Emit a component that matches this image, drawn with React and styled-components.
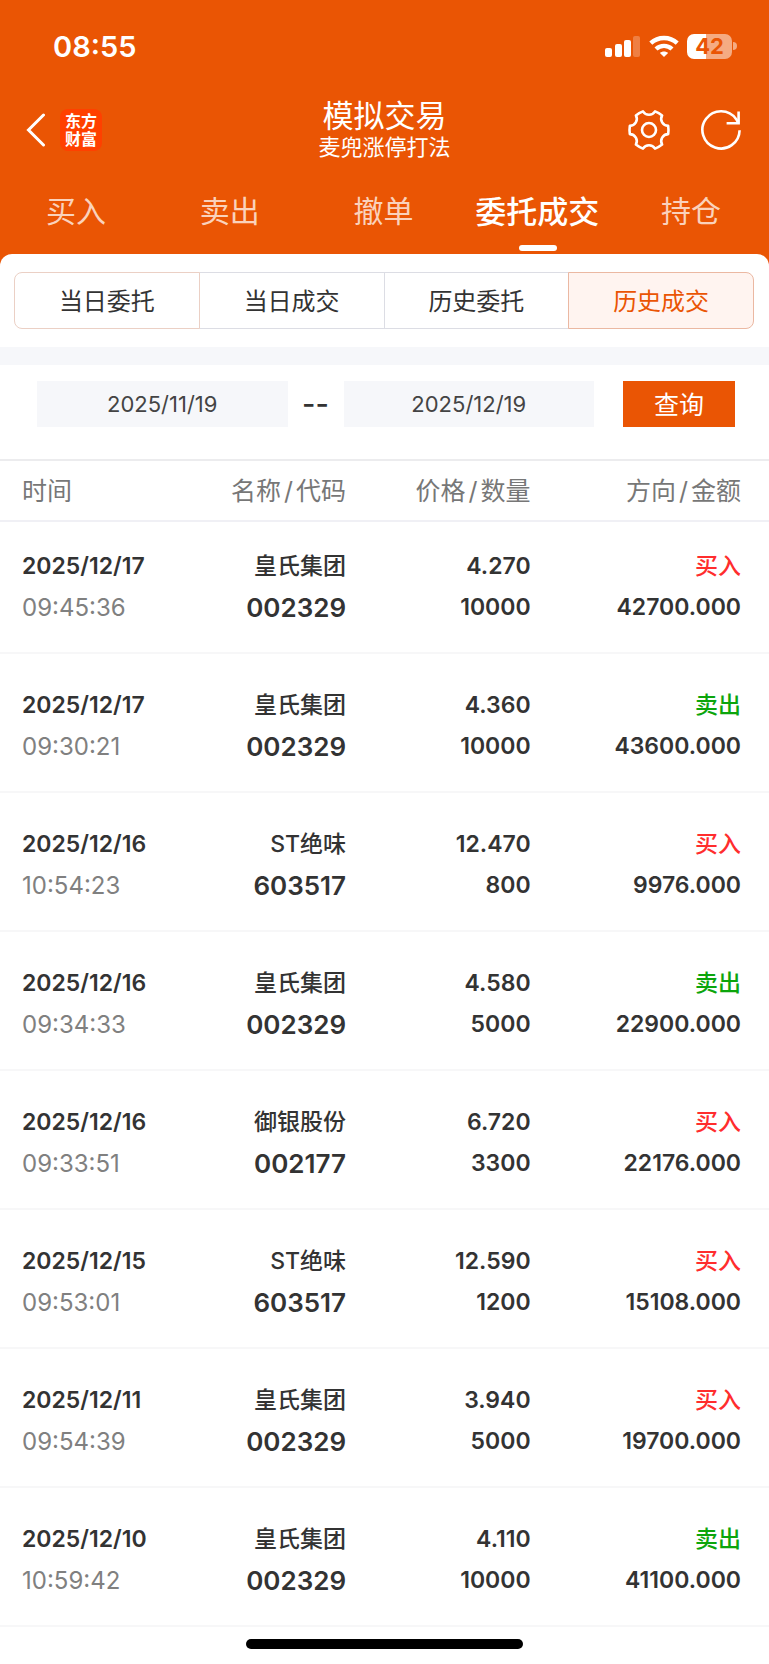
import React, { useState } from 'react';
import styled, { createGlobalStyle } from 'styled-components';

const GlobalStyle = createGlobalStyle`
  * {
    box-sizing: border-box;
  }

  body {
    margin: 0;
    background-color: #fff;
    color: #333;
    font-family: Inter, 'Noto Sans CJK SC', sans-serif;
  }

  button, input {
    font-family: inherit;
    margin: 0;
  }
`;

const tabs = ['买入', '卖出', '撤单', '委托成交', '持仓'];
const filters = ['当日委托', '当日成交', '历史委托', '历史成交'];

const trades = [
  { date: '2025/12/17', time: '09:45:36', name: '皇氏集团', code: '002329', price: '4.270', count: '10000', side: '买入', amount: '42700.000' },
  { date: '2025/12/17', time: '09:30:21', name: '皇氏集团', code: '002329', price: '4.360', count: '10000', side: '卖出', amount: '43600.000' },
  { date: '2025/12/16', time: '10:54:23', name: 'ST绝味', code: '603517', price: '12.470', count: '800', side: '买入', amount: '9976.000' },
  { date: '2025/12/16', time: '09:34:33', name: '皇氏集团', code: '002329', price: '4.580', count: '5000', side: '卖出', amount: '22900.000' },
  { date: '2025/12/16', time: '09:33:51', name: '御银股份', code: '002177', price: '6.720', count: '3300', side: '买入', amount: '22176.000' },
  { date: '2025/12/15', time: '09:53:01', name: 'ST绝味', code: '603517', price: '12.590', count: '1200', side: '买入', amount: '15108.000' },
  { date: '2025/12/11', time: '09:54:39', name: '皇氏集团', code: '002329', price: '3.940', count: '5000', side: '买入', amount: '19700.000' },
  { date: '2025/12/10', time: '10:59:42', name: '皇氏集团', code: '002329', price: '4.110', count: '10000', side: '卖出', amount: '41100.000' },
];

// six flat teeth joined by shallow curves
const gearPath = () => {
  const at = (radius, degrees) => {
    const angle = (degrees * Math.PI) / 180;
    return `${(22 + radius * Math.cos(angle)).toFixed(2)} ${(22 + radius * Math.sin(angle)).toFixed(2)}`;
  };
  let d = `M${at(19.6, -12)}`;
  for (let a = 0; a < 360; a += 60) {
    d += `Q${at(19.8, a)} ${at(19.6, a + 12)}C${at(14.4, a + 17)} ${at(14.4, a + 43)} ${at(19.6, a + 48)}`;
  }
  return `${d}Z`;
};

const SignalIcon = () => (
  <svg width="36" height="24" viewBox="0 0 36 24" fill="#fff" aria-hidden="true">
    <rect x="0" y="14" width="7" height="9" rx="2" />
    <rect x="10" y="10" width="7" height="13" rx="2" />
    <rect x="19" y="6" width="7" height="17" rx="2" />
    <rect x="28" y="2" width="7" height="21" rx="2" opacity="0.25" />
  </svg>
);

const WifiIcon = () => (
  <svg width="30" height="24" viewBox="0 0 30 24" fill="none" stroke="#fff" strokeWidth="4.4" aria-hidden="true">
    <path d="M1.8 9.2C9.2 2.3 20.8 2.3 28.2 9.2" />
    <path d="M7 15C11.5 10.8 18.5 10.8 23 15" />
    <path d="M15 23L10.9 18.9C13.2 16.9 16.8 16.9 19.1 18.9Z" fill="#fff" stroke="none" />
  </svg>
);

const BackIcon = () => (
  <svg width="20" height="34" viewBox="0 0 20 34" fill="none" stroke="#fff" strokeWidth="3" aria-hidden="true">
    <path d="M17.5 2L2.5 17L17.5 32" strokeLinecap="round" />
  </svg>
);

const GearIcon = () => (
  <svg width="44" height="44" viewBox="0 0 44 44" fill="none" stroke="#fff" strokeWidth="2.6" strokeLinejoin="round" aria-hidden="true">
    <path d={gearPath()} />
    <circle cx="22" cy="22" r="7" />
  </svg>
);

const RefreshIcon = () => (
  <svg width="44" height="44" viewBox="0 0 44 44" fill="none" stroke="#fff" strokeWidth="2.6" aria-hidden="true">
    <path d="M40.6 22.2A18.6 18.6 0 1 1 37.2 11.2L39.4 15" />
    <path d="M39.6 3.5V15.2H27.6" />
  </svg>
);

const App = () => {
  const [tab, setTab] = useState('委托成交');
  const [filter, setFilter] = useState('历史成交');
  const [from, setFrom] = useState('2025/11/19');
  const [to, setTo] = useState('2025/12/19');

  return (
    <>
      <GlobalStyle />
      <Header>
        <StatusBar>
          <Clock>08:55</Clock>
          <StatusIcons>
            <SignalIcon />
            <WifiIcon />
            <Battery>
              <BatteryBody>42</BatteryBody>
              <BatteryCap />
            </Battery>
          </StatusIcons>
        </StatusBar>
        <TitleBar>
          <BarSide>
            <IconButton aria-label="返回"><BackIcon /></IconButton>
            <Logo>东方<br />财富</Logo>
          </BarSide>
          <Titles>
            <Title>模拟交易</Title>
            <Subtitle>麦兜涨停打法</Subtitle>
          </Titles>
          <BarSide $end>
            <IconButton aria-label="设置"><GearIcon /></IconButton>
            <IconButton aria-label="刷新"><RefreshIcon /></IconButton>
          </BarSide>
        </TitleBar>
        <Tabs>
          {tabs.map((name) => (
            <Tab key={name} $active={name === tab} onClick={() => setTab(name)}>{name}</Tab>
          ))}
        </Tabs>
      </Header>

      <Main>
        <Filters>
          {filters.map((name) => (
            <Filter key={name} $active={name === filter} onClick={() => setFilter(name)}>{name}</Filter>
          ))}
        </Filters>
        <SearchForm onSubmit={(e) => e.preventDefault()}>
          <DateInput aria-label="开始日期" value={from} onChange={(e) => setFrom(e.target.value)} />
          <Dash>--</Dash>
          <DateInput aria-label="结束日期" value={to} onChange={(e) => setTo(e.target.value)} />
          <SearchButton type="submit">查询</SearchButton>
        </SearchForm>

        <TradeTable>
          <thead>
            <tr>
              <HeadCell $width="24%">时间</HeadCell>
              <HeadCell $width="21%">名称<Slash>/</Slash>代码</HeadCell>
              <HeadCell $width="24%">价格<Slash>/</Slash>数量</HeadCell>
              <HeadCell $width="31%">方向<Slash>/</Slash>金额</HeadCell>
            </tr>
          </thead>
          <tbody>
            {trades.map((trade) => (
              <TradeRow key={`${trade.date} ${trade.time}`}>
                <Cell>
                  <Line>{trade.date}</Line>
                  <TimeLine>{trade.time}</TimeLine>
                </Cell>
                <Cell>
                  <NameLine>{trade.name}</NameLine>
                  <CodeLine>{trade.code}</CodeLine>
                </Cell>
                <Cell>
                  <Line>{trade.price}</Line>
                  <Line>{trade.count}</Line>
                </Cell>
                <Cell>
                  <SideLine $buy={trade.side === '买入'}>{trade.side}</SideLine>
                  <Line>{trade.amount}</Line>
                </Cell>
              </TradeRow>
            ))}
          </tbody>
        </TradeTable>
      </Main>
      <HomeIndicator />
    </>
  );
};

export default App;

const Header = styled.header`
  background-color: #ea5504;
  color: #fff;
  padding-bottom: 12px;
`;

const StatusBar = styled.div`
  display: flex;
  align-items: center;
  justify-content: space-between;
  height: 92px;
  padding: 0 32px 0 53px;
`;

const Clock = styled.span`
  font-size: 29px;
  font-weight: 600;
`;

const StatusIcons = styled.div`
  display: flex;
  align-items: center;
  gap: 8px;
`;

const Battery = styled.div`
  display: flex;
  align-items: center;
  gap: 1px;
`;

const BatteryBody = styled.span`
  width: 45px;
  height: 25px;
  border-radius: 7px;
  background: linear-gradient(to right, #fff 42%, #f5ab82 42%);
  color: #ea5504;
  font-size: 22px;
  font-weight: 700;
  line-height: 25px;
  text-align: center;
`;

const BatteryCap = styled.span`
  width: 4px;
  height: 8px;
  border-radius: 0 4px 4px 0;
  background-color: #f5ab82;
`;

const TitleBar = styled.div`
  display: flex;
  align-items: center;
  justify-content: space-between;
  height: 76px;
  padding: 0 26px;
`;

const BarSide = styled.div`
  display: flex;
  flex: 1;
  align-items: center;
  justify-content: ${(props) => (props.$end ? 'flex-end' : 'flex-start')};
  gap: ${(props) => (props.$end ? '28px' : '14px')};
`;

const IconButton = styled.button`
  display: flex;
  padding: 0;
  border: none;
  background: none;
  cursor: pointer;
`;

const Logo = styled.span`
  width: 42px;
  height: 42px;
  padding-top: 3px;
  border-radius: 8px;
  background-color: #ff4000;
  font-size: 16px;
  font-weight: 700;
  line-height: 18px;
  text-align: center;
`;

const Titles = styled.div`
  text-align: center;
`;

const Title = styled.h1`
  margin: 0;
  font-size: 31px;
  font-weight: 400;
  line-height: 34px;
`;

const Subtitle = styled.p`
  margin: 0;
  font-size: 22px;
  line-height: 28px;
`;

const Tabs = styled.nav`
  display: flex;
`;

const Tab = styled.button`
  position: relative;
  flex: 1;
  height: 86px;
  padding: 0 2px 4px 0;
  border: none;
  background: none;
  color: ${(props) => (props.$active ? '#fff' : '#fad2bc')};
  font-size: ${(props) => (props.$active ? '31px' : '30px')};
  font-weight: ${(props) => (props.$active ? 500 : 400)};
  white-space: nowrap;
  cursor: pointer;

  &::after {
    content: '';
    display: ${(props) => (props.$active ? 'block' : 'none')};
    position: absolute;
    bottom: 3px;
    left: 50%;
    width: 38px;
    height: 6px;
    margin-left: -19px;
    border-radius: 3px;
    background-color: #fff;
  }
`;

const Main = styled.main`
  margin-top: -12px;
  border-radius: 12px 12px 0 0;
  background-color: #fff;
`;

const Filters = styled.div`
  display: flex;
  padding: 18px 15px 18px 14px;
  border-bottom: 18px solid #f6f7fa;
`;

const Filter = styled.button`
  flex: 1;
  height: 57px;
  margin-left: -1px;
  padding: 0 0 2px;
  border: 1px solid ${(props) => (props.$active ? '#ebb8a2' : '#dcdde4')};
  background-color: ${(props) => (props.$active ? '#fff4f0' : '#fff')};
  color: ${(props) => (props.$active ? '#ea5504' : '#333')};
  font-size: 24px;
  cursor: pointer;

  &:first-child {
    z-index: 1;
    margin-left: 0;
    border-color: #ebd0c5;
    border-radius: 8px 0 0 8px;
  }

  &:last-child {
    border-radius: 0 8px 8px 0;
  }
`;

const SearchForm = styled.form`
  display: flex;
  align-items: center;
  padding: 16px 34px 32px 37px;
`;

const DateInput = styled.input`
  flex: 1;
  min-width: 0;
  height: 46px;
  padding: 0;
  border: none;
  border-radius: 0;
  background-color: #f6f7fa;
  color: #444;
  font-size: 22px;
  text-align: center;
`;

const Dash = styled.span`
  width: 56px;
  font-size: 29px;
  font-weight: 500;
  line-height: 46px;
  text-align: center;
`;

const SearchButton = styled.button`
  width: 112px;
  height: 46px;
  margin-left: 29px;
  padding: 0 0 2px;
  border: none;
  background-color: #ea5504;
  color: #fff;
  font-size: 25px;
  cursor: pointer;
`;

const TradeTable = styled.table`
  width: 100%;
  table-layout: fixed;
  border-collapse: separate;
  border-spacing: 0;
  text-align: right;

  th:first-child,
  td:first-child {
    padding-left: 22px;
    text-align: left;
  }

  th:last-child,
  td:last-child {
    padding-right: 28px;
  }
`;

const HeadCell = styled.th`
  width: ${(props) => props.$width};
  height: 63px;
  padding: 0 0 3px;
  border-top: 2px solid #ececee;
  border-bottom: 2px solid #f0f0f5;
  color: #777;
  font-size: 25px;
  font-weight: 400;
  white-space: nowrap;
`;

const Slash = styled.span`
  margin: 0 3px;
`;

const Cell = styled.td`
  padding: 31px 0 24px;
  border-bottom: 2px solid #f7f7f8;
`;

const TradeRow = styled.tr`
  &:first-child ${Cell} {
    padding-top: 24px;
  }
`;

const Line = styled.div`
  font-size: 23px;
  font-weight: 600;
  line-height: 41px;
  white-space: nowrap;
`;

const TimeLine = styled(Line)`
  color: #808080;
  font-size: 24px;
  font-weight: 400;
`;

const NameLine = styled(Line)`
  font-weight: 500;
`;

const CodeLine = styled(Line)`
  font-size: 26px;
`;

const SideLine = styled(Line)`
  color: ${(props) => (props.$buy ? '#ff2d2d' : '#0ca50c')};
  font-weight: 500;
`;

const HomeIndicator = styled.div`
  width: 36%;
  height: 10px;
  margin: 12px auto 15px;
  border-radius: 5px;
  background-color: #000;
`;
